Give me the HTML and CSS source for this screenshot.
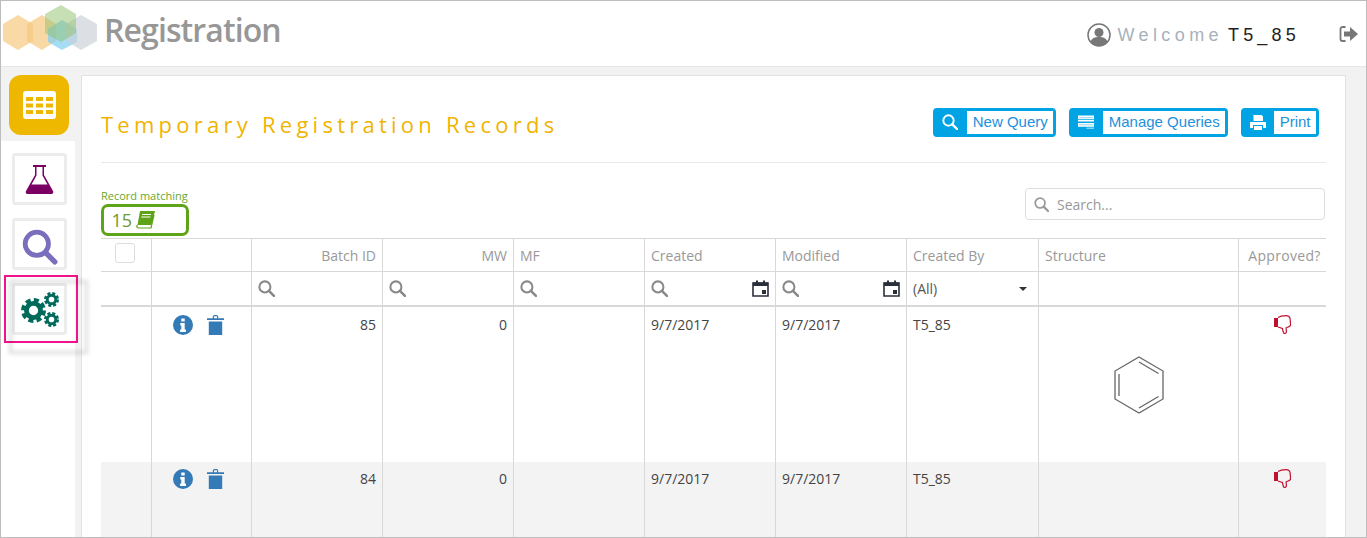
FILE: index.html
```html
<!DOCTYPE html>
<html lang="en">
<head>
    <meta charset="UTF-8">
    <title>Registration</title>
    <link rel="stylesheet" href="styles.css">
</head>
<body>
    <svg class="icon-defs" width="0" height="0">
        <symbol id="i-search" viewBox="0 0 16 16">
            <circle cx="6.500" cy="6.500" r="5.200" fill="none" stroke="currentColor" stroke-width="1.900"/>
            <path d="M10.300 10.300 15 15" fill="none" stroke="currentColor" stroke-width="2.400" stroke-linecap="round"/>
        </symbol>
        <symbol id="i-calendar" viewBox="0 0 17 17">
            <path d="M1 3h15v13H1z" fill="none" stroke="currentColor" stroke-width="1.600"/>
            <path d="M1 2.500h15V6H1zM4 0.500h2v3H4zM11 0.500h2v3h-2zM10 10h4v4h-4z" fill="currentColor"/>
        </symbol>
        <symbol id="i-info" viewBox="0 0 20 20">
            <circle cx="10" cy="10" r="10" fill="currentColor"/>
            <path d="M8.300 3.500h3.400v3H8.300zM7.300 8h4.400v6.500h1.200V17H7.100v-2.500h1.200v-4h-1z" fill="#fff"/>
        </symbol>
        <symbol id="i-trash" viewBox="0 0 17 20">
            <path d="M0 3.200h5.800V1.200L7 0h3l1.200 1.200v2H17v1.800H0zM7 1.200v2h3v-2zM1.800 6.500h13.400V20H1.800z" fill="currentColor" fill-rule="evenodd"/>
        </symbol>
        <symbol id="i-thumb" viewBox="0 0 17 20">
            <path d="M0 3h4v9H0z" fill="currentColor"/>
            <path d="M4 2.500C6 1.200 9 .7 12 .7c2 0 3.500.8 4 2.500l.6 6c0 1.500-.8 2.300-2 2.600l-2.500 1 .3 4c0 1.800-2.500 2.300-3 .7l-1-4L4 12" fill="none" stroke="currentColor" stroke-width="1.200"/>
        </symbol>
        <symbol id="i-gear" viewBox="0 0 24 24">
            <circle cx="12" cy="12" r="6.800" fill="none" stroke="currentColor" stroke-width="4.600"/>
            <circle cx="12" cy="12" r="10" fill="none" stroke="currentColor" stroke-width="4" stroke-dasharray="4.800 3.054"/>
        </symbol>
    </svg>

    <header class="topbar">
        <svg class="logo" width="100" height="52" viewBox="0 0 100 52">
            <polygon points="18,15 33,24 33,41 18,50 3,41 3,24" fill="#f9d9a6"/>
            <polygon points="42,15 56,24 56,41 42,50 27,41 27,24" fill="#f5c77e" opacity="0.7"/>
            <polygon points="62,20 77,29 77,42 62,50 48,42 48,29" fill="#7fcdf2" opacity="0.7"/>
            <polygon points="81,15 97,24 97,41 81,50 66,41 66,24" fill="#c9cfd6" opacity="0.65"/>
            <polygon points="61,5 76,14 76,33 61,42 45,33 45,14" fill="#8fc06a" opacity="0.5"/>
        </svg>
        <span class="app-name">Registration</span>
        <div class="user-box">
            <svg class="user-icon" width="24" height="24" viewBox="0 0 24 24">
                <circle cx="12" cy="12" r="11" fill="#fff" stroke="#777" stroke-width="1.500"/>
                <circle cx="12" cy="9.500" r="4.500" fill="#777"/>
                <path d="M3.500 19c1-4 4.500-5 8.500-5s7.500 1 8.500 5c-2 2.600-5 4-8.500 4s-6.500-1.400-8.500-4z" fill="#777"/>
            </svg>
            <span class="welcome">Welcome</span>
            <span class="user-name">T5_85</span>
        </div>
        <svg class="logout" width="19" height="18" viewBox="0 0 19 18">
            <path d="M6.500 2H3.500C2.300 2 1.500 2.800 1.500 4v10c0 1.200.8 2 2 2h3" fill="none" stroke="#777" stroke-width="1.800"/>
            <path d="M5 6.500h6V2l8 7-8 7v-4.500H5z" fill="#777"/>
        </svg>
    </header>

    <div class="content">
        <aside class="sidebar">
            <div class="tile-main">
                <svg width="33" height="28" viewBox="0 0 33 28">
                    <rect width="33" height="28" rx="3" fill="#fff"/>
                    <path d="M3 6h7v4H3zM13 6h7v4h-7zM23 6h7v4h-7zM3 12.500h7v4H3zM13 12.500h7v4h-7zM23 12.500h7v4h-7zM3 19h7v4H3zM13 19h7v4h-7zM23 19h7v4h-7z" fill="#eeb700"/>
                </svg>
            </div>
            <nav class="side-panel">
                <div class="tile">
                    <svg width="29" height="31" viewBox="0 0 29 31">
                        <path d="M8 1h13v2h-2v8l9 16c.8 1.500 0 3-1.500 3h-24C1 30 .2 28.500 1 27l9-16V3H8z" fill="#7a0064"/>
                        <path d="M11.500 3h6v8.500L22.500 20.500H6.500L11.500 11.500z" fill="#fff"/>
                    </svg>
                </div>
                <div class="tile">
                    <svg class="lens" width="36" height="36" viewBox="0 0 34 34">
                        <circle cx="14" cy="14" r="11" fill="none" stroke="#7a6fbd" stroke-width="4.500"/>
                        <path d="M22.500 22.500 31 31" stroke="#7a6fbd" stroke-width="5" stroke-linecap="round"/>
                    </svg>
                </div>
                <div class="tile tile-active">
                    <span class="highlight"></span>
                    <div class="gears">
                        <svg class="gear-big"><use href="#i-gear"/></svg>
                        <svg class="gear-top"><use href="#i-gear"/></svg>
                        <svg class="gear-bottom"><use href="#i-gear"/></svg>
                    </div>
                </div>
            </nav>
        </aside>

        <main class="card">
            <div class="title-row">
                <h1>Temporary Registration Records</h1>
                <div class="actions">
                    <a class="btn">
                        <svg class="btn-icon" width="16" height="16"><use href="#i-search"/></svg>
                        <span>New Query</span>
                    </a>
                    <a class="btn">
                        <svg class="btn-icon" width="16" height="14" viewBox="0 0 17 14">
                            <path d="M0 0h17v4H0zM0 5h17v1.500H0zM0 8h17v4H0zM9 13h8v1H9z" fill="#fff"/>
                            <path d="M1 2h15v1H1zM1 9.500h15v1H1z" fill="#8fd4f2"/>
                        </svg>
                        <span>Manage Queries</span>
                    </a>
                    <a class="btn btn-print">
                        <svg class="btn-icon" width="16" height="15" viewBox="0 0 16 15">
                            <path d="M3.500 0h8L13 1.500V6H3.500zM0 7h16v6h-3v-3H3v3H0zM4 11h8v4H4z" fill="#fff"/>
                        </svg>
                        <span>Print</span>
                    </a>
                </div>
            </div>

            <div class="summary-row">
                <div class="matching">
                    <div class="matching-label">Record matching</div>
                    <div class="matching-box">
                        <span>15</span>
                        <svg width="20" height="18" viewBox="0 0 20 18">
                            <path d="M5 0h15l-3.500 14H2.500z" fill="#5fa319"/>
                            <path d="M2.500 14c-1 1-1 2.500.5 3h13l3-13" fill="none" stroke="#5fa319" stroke-width="1.200"/>
                            <path d="M7 3.500h9M6.300 6h9" stroke="#fff" stroke-width="1.200"/>
                        </svg>
                    </div>
                </div>
                <div class="search-box">
                    <svg width="15" height="15"><use href="#i-search"/></svg>
                    <span>Search...</span>
                </div>
            </div>

            <table class="records">
                <colgroup>
                    <col class="c-check"><col class="c-actions"><col class="c-data"><col class="c-data"><col class="c-data"><col class="c-data"><col class="c-data"><col class="c-by"><col class="c-structure"><col class="c-approved">
                </colgroup>
                <thead>
                    <tr class="head-row">
                        <th class="check-cell"><span class="checkbox"></span></th>
                        <th></th>
                        <th class="right">Batch ID</th>
                        <th class="right">MW</th>
                        <th>MF</th>
                        <th>Created</th>
                        <th>Modified</th>
                        <th>Created By</th>
                        <th>Structure</th>
                        <th class="center approved">Approved?</th>
                    </tr>
                    <tr class="filter-row">
                        <td></td>
                        <td></td>
                        <td><svg class="filter-icon"><use href="#i-search"/></svg></td>
                        <td><svg class="filter-icon"><use href="#i-search"/></svg></td>
                        <td><svg class="filter-icon"><use href="#i-search"/></svg></td>
                        <td><div class="filter-flex"><svg class="filter-icon"><use href="#i-search"/></svg><svg class="cal-icon"><use href="#i-calendar"/></svg></div></td>
                        <td><div class="filter-flex"><svg class="filter-icon"><use href="#i-search"/></svg><svg class="cal-icon"><use href="#i-calendar"/></svg></div></td>
                        <td><div class="filter-flex"><span class="filter-all">(All)</span><span class="caret"></span></div></td>
                        <td></td>
                        <td></td>
                    </tr>
                </thead>
                <tbody>
                    <tr class="row-tall">
                        <td></td>
                        <td><div class="row-actions"><svg class="info-icon"><use href="#i-info"/></svg><svg class="trash-icon"><use href="#i-trash"/></svg></div></td>
                        <td class="right">85</td>
                        <td class="right">0</td>
                        <td></td>
                        <td>9/7/2017</td>
                        <td>9/7/2017</td>
                        <td>T5_85</td>
                        <td class="center">
                            <svg class="benzene" width="52" height="58" viewBox="0 0 52 58">
                                <path d="M26 1 50 15v28L26 57 2 43V15z" fill="none" stroke="#666" stroke-width="1.300"/>
                                <path d="M6 18v22M26 6l19.500 11.500M45.500 40.500 26 52" fill="none" stroke="#666" stroke-width="1.300"/>
                            </svg>
                        </td>
                        <td class="center"><svg class="thumb-icon"><use href="#i-thumb"/></svg></td>
                    </tr>
                    <tr class="row-alt">
                        <td></td>
                        <td><div class="row-actions"><svg class="info-icon"><use href="#i-info"/></svg><svg class="trash-icon"><use href="#i-trash"/></svg></div></td>
                        <td class="right">84</td>
                        <td class="right">0</td>
                        <td></td>
                        <td>9/7/2017</td>
                        <td>9/7/2017</td>
                        <td>T5_85</td>
                        <td></td>
                        <td class="center"><svg class="thumb-icon"><use href="#i-thumb"/></svg></td>
                    </tr>
                </tbody>
            </table>
        </main>
    </div>
</body>
</html>
```

FILE: styles.css
```css
* {
    margin: 0;
    padding: 0;
    box-sizing: border-box;
}

html, body {
    height: 538px;
    overflow: hidden;
}

body {
    display: flex;
    flex-direction: column;
    border: 1px solid #bdbdbd;
    background-color: #f2f2f2;
    font-family: "Open Sans", sans-serif;
    font-size: 14px;
    color: #444;
}

.icon-defs {
    position: absolute;
}

/* Top bar */
.topbar {
    display: flex;
    align-items: center;
    height: 66px;
    flex-shrink: 0;
    background-color: #fff;
    border-bottom: 1px solid #e6e6e6;
}

.logo {
    align-self: flex-start;
    margin: -1px 0 0 -1px;
    flex-shrink: 0;
}

.app-name {
    margin: 0 0 8px 4px;
    font-size: 32px;
    font-weight: 600;
    letter-spacing: -0.9px;
    color: #979797;
}

.user-box {
    display: flex;
    align-items: center;
    margin: 3px 0 0 auto;
    font-family: "Liberation Sans", sans-serif;
    font-size: 18px;
    letter-spacing: 4.400px;
}

.user-icon {
    margin-right: 6px;
}

.welcome {
    color: #a7b1bc;
    margin-right: 5px;
}

.user-name {
    color: #222;
    letter-spacing: 4.200px;
}

.logout {
    margin: 0 8px 0 39px;
}

/* Sidebar */
.content {
    display: flex;
    flex: 1;
    min-height: 0;
    padding: 8px 20px 0 0;
}

.sidebar {
    display: flex;
    flex-direction: column;
    width: 80px;
    flex-shrink: 0;
}

.tile-main {
    display: flex;
    align-items: center;
    justify-content: center;
    width: 60px;
    height: 60px;
    margin-left: 8px;
    background-color: #eeb700;
    border-radius: 12px;
}

.side-panel {
    flex: 1;
    width: 74px;
    margin-top: 6px;
    padding: 12px 0 0 11px;
    background-color: #fff;
}

.tile {
    position: relative;
    display: flex;
    align-items: center;
    justify-content: center;
    width: 55px;
    height: 52px;
    margin-bottom: 13px;
    background-color: #fff;
    border: 3px solid #ececec;
    border-radius: 3px;
}

.lens {
    margin-top: 5px;
}

/* Pink annotation drawn over the active tile */
.highlight {
    position: absolute;
    left: -11px;
    top: -11px;
    width: 74px;
    height: 68px;
    border: 2px solid #f0148c;
}

.highlight::before {
    content: "";
    position: absolute;
    left: 3px;
    top: 3px;
    width: 73px;
    height: 68px;
    border: 3px solid rgba(0, 0, 0, 0.14);
    filter: blur(2px);
}

.gears {
    position: relative;
    width: 38px;
    height: 35px;
}

.gears svg {
    position: absolute;
    color: #006a5b;
}

.gear-big {
    left: 0;
    top: 6px;
    width: 25px;
    height: 25px;
}

.gear-top {
    left: 23px;
    top: 0;
    width: 15px;
    height: 15px;
}

.gear-bottom {
    left: 23px;
    top: 20px;
    width: 15px;
    height: 15px;
}

/* Main card */
.card {
    width: 1265px;
    padding: 0 19px;
    background-color: #fff;
    border: 1px solid #e2e2e2;
    border-bottom: none;
    overflow: hidden;
}

.title-row {
    display: flex;
    align-items: center;
    justify-content: space-between;
    height: 87px;
    padding: 10px 7px 0 0;
    border-bottom: 1px solid #e8e8e8;
}

h1 {
    font-size: 22px;
    font-weight: 400;
    letter-spacing: 4.250px;
    color: #f0b400;
}

.actions {
    display: flex;
    gap: 13px;
    margin-top: -4px;
}

.btn {
    display: flex;
    align-items: stretch;
    height: 29px;
    background-color: #00a4e4;
    border: 3px solid #00a4e4;
    border-radius: 4px;
    font-family: "Liberation Sans", sans-serif;
    font-size: 15px;
    color: #1e90dc;
}

.btn-icon {
    align-self: center;
    margin: 0 9px 0 6px;
    color: #fff;
}

.btn-print .btn-icon {
    margin-right: 8px;
}

.btn span {
    display: flex;
    align-items: center;
    padding: 0 5.500px 2px;
    background-color: #fff;
}

/* Record count and search */
.summary-row {
    display: flex;
    align-items: flex-start;
    justify-content: space-between;
    height: 75px;
    padding-top: 25px;
}

.matching-label {
    font-size: 11px;
    line-height: 16px;
    color: #6aa82a;
}

.matching-box {
    display: flex;
    align-items: center;
    gap: 3px;
    width: 88px;
    height: 32px;
    padding-left: 7.500px;
    border: 3px solid #5fa319;
    border-radius: 7px;
    font-size: 18px;
    color: #6f9a2e;
}

.search-box {
    display: flex;
    align-items: center;
    gap: 8px;
    width: 300px;
    height: 32px;
    margin-right: 1px;
    padding-left: 8px;
    border: 1px solid #ddd;
    border-radius: 4px;
    color: #999;
}

/* Table */
.records {
    width: 1225px;
    table-layout: fixed;
    border-collapse: separate;
    border-spacing: 0;
    border-top: 1px solid #d8d8d8;
}

.c-check { width: 51px; }
.c-actions { width: 100px; }
.c-data { width: 131px; }
.c-by { width: 132px; }
.c-structure { width: 200px; }
.c-approved { width: 87px; }

th, td {
    padding: 0 6px;
    border-right: 1px solid #d8d8d8;
    text-align: left;
    vertical-align: top;
}

th:last-child, td:last-child {
    border-right: none;
}

th {
    height: 33px;
    padding-top: 2px;
    font-weight: 400;
    line-height: 30px;
    color: #999;
    border-bottom: 1px solid #d8d8d8;
}

.right {
    text-align: right;
}

th.center, td.center {
    text-align: center;
}

th.approved {
    padding-left: 8px;
    padding-right: 4px;
    letter-spacing: 0.300px;
}

.check-cell {
    padding: 4px 0 0 14px;
    line-height: 0;
}

.checkbox {
    display: inline-block;
    width: 20px;
    height: 20px;
    background-color: #fff;
    border: 1px solid #ddd;
    border-radius: 3px;
}

.filter-row td {
    height: 35px;
    vertical-align: middle;
    border-bottom: 2px solid #d8d8d8;
}

.filter-flex {
    display: flex;
    align-items: center;
    justify-content: space-between;
}

.filter-icon {
    display: block;
    width: 17px;
    height: 17px;
    color: #888;
}

.cal-icon {
    width: 17px;
    height: 17px;
    color: #2b2f3a;
}

.filter-all {
    color: #555;
}

.caret {
    width: 0;
    height: 0;
    margin-right: 5px;
    border-left: 4px solid transparent;
    border-right: 4px solid transparent;
    border-top: 4px solid #333;
}

tbody td {
    padding-top: 8px;
    line-height: 20px;
}

.row-tall td {
    height: 155px;
}

.row-alt td {
    height: 80px;
    padding-top: 7px;
    background-color: #f3f3f3;
}

.row-actions {
    display: flex;
    gap: 14px;
    padding-left: 15px;
}

.info-icon {
    width: 20px;
    height: 20px;
    color: #337ab7;
}

.trash-icon {
    width: 17px;
    height: 20px;
    color: #337ab7;
}

.thumb-icon {
    width: 17px;
    height: 20px;
    color: #c0102f;
}

.benzene {
    display: block;
    margin: 41px auto 0;
}
```
